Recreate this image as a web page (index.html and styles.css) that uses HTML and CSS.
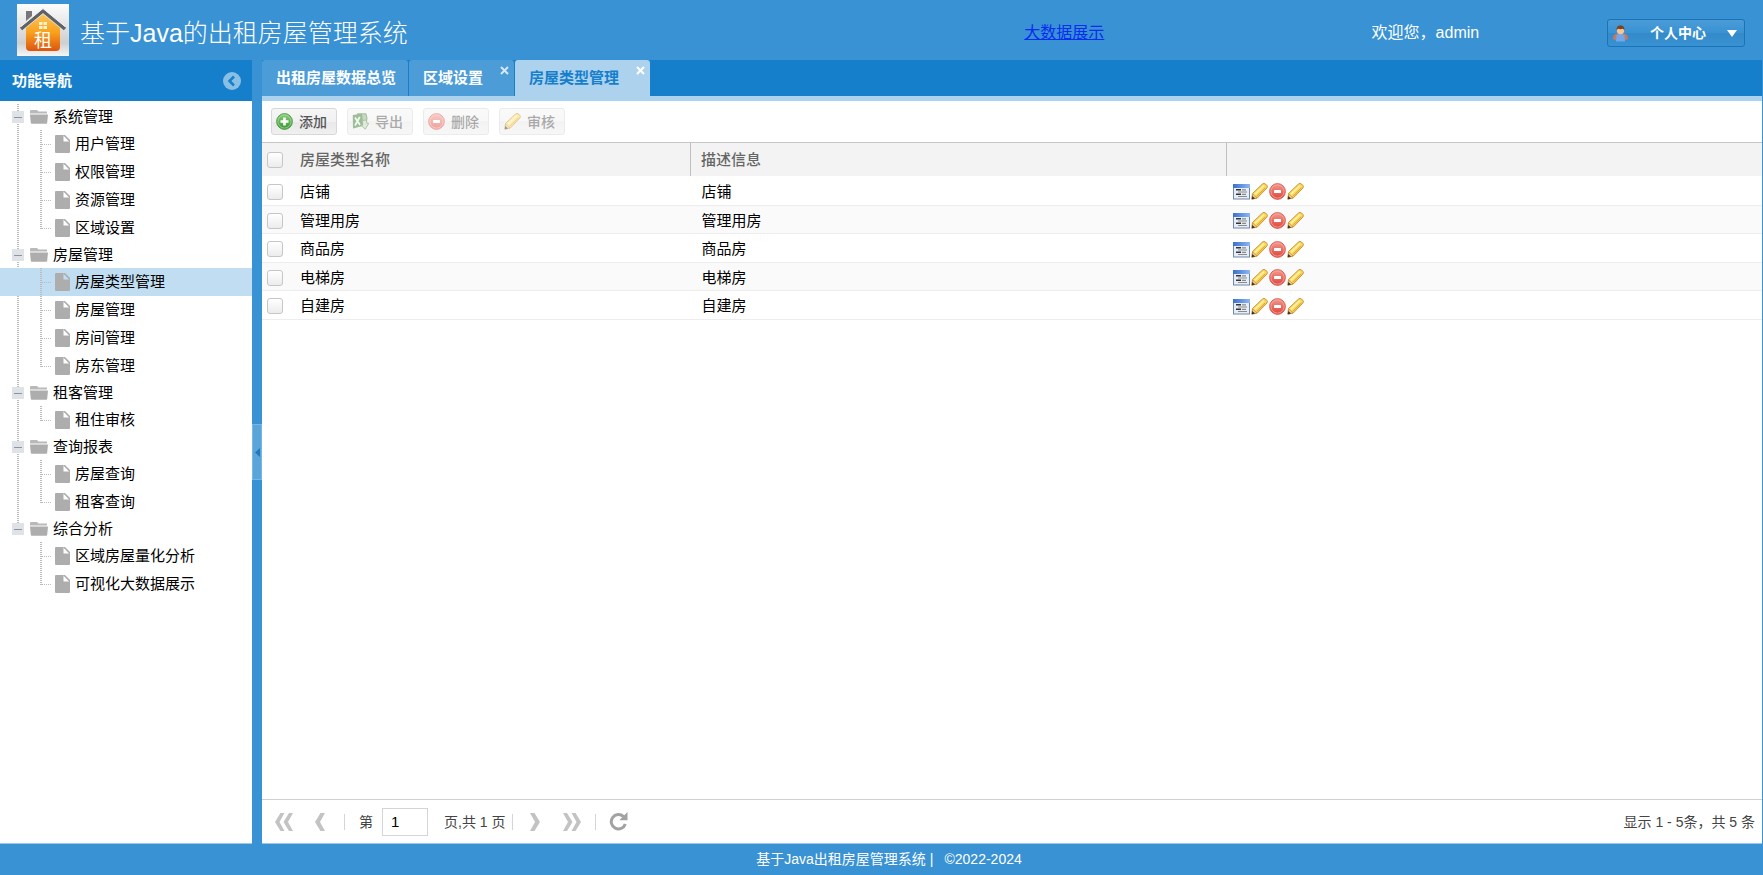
FILE: index.html
```html
<!DOCTYPE html>
<html lang="zh-CN">
<head>
<meta charset="utf-8">
<title>基于Java的出租房屋管理系统</title>
<link rel="stylesheet" href="styles.css">
</head>
<body>
<svg class="defs" width="0" height="0" aria-hidden="true">
  <defs>
    <linearGradient id="g-red" x1="0" y1="0" x2="0" y2="1"><stop offset="0" stop-color="#f29a90"/><stop offset="1" stop-color="#dd4338"/></linearGradient>
    <linearGradient id="g-green" x1="0" y1="0" x2="0" y2="1"><stop offset="0" stop-color="#8fcc84"/><stop offset="1" stop-color="#36962f"/></linearGradient>
    <linearGradient id="g-orange" x1="0" y1="0" x2="0" y2="1"><stop offset="0" stop-color="#fbc65a"/><stop offset=".5" stop-color="#f9a01c"/><stop offset="1" stop-color="#dd5510"/></linearGradient>
    <linearGradient id="g-silver" x1="0" y1="0" x2="0" y2="1"><stop offset="0" stop-color="#fdfdfd"/><stop offset=".75" stop-color="#cfcfcf"/><stop offset="1" stop-color="#f6f6f6"/></linearGradient>
    <linearGradient id="g-bar" x1="0" y1="0" x2="1" y2="0"><stop offset="0" stop-color="#3a6fd0"/><stop offset="1" stop-color="#8db8f2"/></linearGradient>
    <symbol id="folder" viewBox="0 0 18 14"><path fill="#b9b9b9" d="M0 1.2Q0 0 1 0h6l1.6 1.6H17v2H0z"/><path fill="#adadad" d="M0 4.400h18l-.8 8.400q0 1-1 1H1.800q-1 0-1-1z"/></symbol>
    <symbol id="file" viewBox="0 0 15 18"><path fill="#adadad" d="M1 0h7.500v6.500H15V17q0 1-1 1H1q-1 0-1-1V1q0-1 1-1z"/><path fill="#adadad" d="M8 0h2l5 5v2.500L8.600.8z"/></symbol>
    <symbol id="details" viewBox="0 0 17 17"><rect x=".5" y="1.500" width="16" height="14.500" fill="#e6edf6" stroke="#6f88ab"/><rect x="0" y="1" width="17" height="4" fill="url(#g-bar)"/><path stroke="#333" stroke-width="1.500" d="M3 6.800h5M3 11.300h5"/><path stroke="#8b8b86" stroke-width="1.200" d="M5 9h9M9 6.800h4M5 13.500h9M9 11.300h4"/></symbol>
    <symbol id="pencil" viewBox="0 0 17 17"><path fill="#f8d75c" stroke="#c58c2e" stroke-width=".9" stroke-linejoin="round" d="M.8 16.200 1.500 10.500 11.500 1q1.500-1.200 3 0l1.300 1.300q1.200 1.400 0 2.900L6.300 15z"/><path fill="none" stroke="#fff0a3" stroke-width="1.800" d="m3.800 11.300 9.200-8.700"/><path fill="none" stroke="#d99d34" d="m5.800 13.500 8.600-8.600"/><path fill="#efcfa0" stroke="#bd8428" stroke-width=".6" d="M1 16 1.800 11 6 15z"/><path fill="#3b3326" d="m.8 16.300.5-3.300 2.800 2.600z"/></symbol>
    <symbol id="remove" viewBox="0 0 17 17"><circle cx="8.500" cy="8.500" r="7.900" fill="url(#g-red)" stroke="#d95b50" stroke-width=".9"/><circle cx="8.500" cy="8.500" r="6.600" fill="none" stroke="#f6a9a0" stroke-width=".8"/><rect x="5" y="7" width="7" height="3" rx=".6" fill="#fff"/></symbol>
    <symbol id="add" viewBox="0 0 17 17"><circle cx="8.500" cy="8.500" r="7.900" fill="url(#g-green)" stroke="#4a9a40" stroke-width=".9"/><circle cx="8.500" cy="8.500" r="6.600" fill="none" stroke="#b2dcaa" stroke-width=".7"/><path fill="#fff" d="M7.200 4.500h2.600v2.700h2.700v2.600H9.800v2.700H7.200V9.800H4.500V7.200h2.700z"/></symbol>
    <symbol id="excel" viewBox="0 0 17 17"><path fill="#8fb57c" stroke="#4d7d42" d="M5.500.8H14l1 4.200-1 7H6z"/><path fill="#3f7d35" d="M.8 2 10 .8l1.500 12L1 15.500z"/><path stroke="#e9f3e2" stroke-width="1.800" d="m3 4.500 5 7.500M7.800 4 3 12.500"/><path fill="#c4dab8" stroke="#4d7d42" stroke-width=".8" d="m10.500 7.500 4-.5.3 3.300h2l-3.500 5.900-4.500-4h2z"/></symbol>
    <symbol id="first" viewBox="0 0 18 18"><path fill="#c3c3c3" d="M5.500 0h4L4.500 9l5 9h-4L0 9zM14 0h4l-5 9 5 9h-4L8.500 9z"/></symbol>
    <symbol id="prev" viewBox="0 0 10 18"><path fill="#c3c3c3" d="M5.500 0H10L5 9l5 9H5.500L0 9z"/></symbol>
  </defs>
</svg>

<header class="top">
  <div class="brand">
    <svg class="logo" viewBox="0 0 52 52" role="img" aria-label="租">
      <rect width="52" height="52" fill="url(#g-silver)"/>
      <path fill="#777" d="M9 7h6v5l-6 5z"/>
      <path fill="url(#g-orange)" d="M26 10 43 24v19q0 4-4 4H13q-4 0-4-4V24z"/>
      <path fill="none" stroke="#5e6266" stroke-width="3.500" d="M4 25 26 7l22 18"/>
      <path fill="none" stroke="#eee" stroke-width="1" d="M4 22.500 26 4.500l22 18"/>
      <path fill="#fff3cc" d="M22 18h3.500v3H22zm4.500 0H30v3h-3.500zM22 22h3.500v3H22zm4.500 0H30v3h-3.500z"/>
      <text x="26" y="43" class="logo-text" text-anchor="middle">租</text>
    </svg>
    <h1 class="brand-name">基于Java的出租房屋管理系统</h1>
  </div>
  <div class="promo"><a class="bigdata" href="#bigdata">大数据展示</a></div>
  <div class="account">
    <span class="welcome">欢迎您，admin</span>
    <button class="profile" type="button">
      <svg width="17" height="17" viewBox="0 0 17 17" aria-hidden="true"><path fill="#c9785a" d="M.8 14q.5-5 4-5.500h7.400q3.500.5 4 5.500l-2.500 1H3z"/><path fill="#6fa8f0" d="M4 16.500 4.500 10q4-2 8 0l.5 6.500z"/><circle cx="8.500" cy="5.500" r="3.700" fill="#f3c79c"/><path fill="#7a4424" d="M4.600 5.500Q4 .5 8.500.3q4.500.2 3.900 5.200L11 3.800q-2.500.7-5 0z"/></svg>
      <span>个人中心</span>
      <svg width="10" height="7" viewBox="0 0 10 7" aria-hidden="true"><path fill="#fff" d="M0 0h10L5 7z"/></svg>
    </button>
  </div>
</header>

<div class="body">
  <aside class="side">
    <div class="side-head">
      <h2 class="side-title">功能导航</h2>
      <button class="round" type="button" aria-label="收起导航"><svg width="18" height="18" viewBox="0 0 18 18" aria-hidden="true"><circle cx="9" cy="9" r="9" fill="#8abfe5"/><path fill="none" stroke="#157fcc" stroke-width="2.500" d="m11 4.500-4.500 4.500 4.500 4.500"/></svg></button>
    </div>
    <nav>
      <ul class="tree">
        <li class="branch"><button class="node" type="button"><i class="minus"></i><svg class="folder"><use href="#folder"/></svg>系统管理</button>
          <ul class="leaves">
            <li><a href="#u"><svg class="file"><use href="#file"/></svg>用户管理</a></li>
            <li><a href="#p"><svg class="file"><use href="#file"/></svg>权限管理</a></li>
            <li><a href="#r"><svg class="file"><use href="#file"/></svg>资源管理</a></li>
            <li><a href="#a"><svg class="file"><use href="#file"/></svg>区域设置</a></li>
          </ul>
        </li>
        <li class="branch"><button class="node" type="button"><i class="minus"></i><svg class="folder"><use href="#folder"/></svg>房屋管理</button>
          <ul class="leaves">
            <li class="current"><a href="#t" aria-current="page"><svg class="file"><use href="#file"/></svg>房屋类型管理</a></li>
            <li><a href="#h"><svg class="file"><use href="#file"/></svg>房屋管理</a></li>
            <li><a href="#room"><svg class="file"><use href="#file"/></svg>房间管理</a></li>
            <li><a href="#l"><svg class="file"><use href="#file"/></svg>房东管理</a></li>
          </ul>
        </li>
        <li class="branch"><button class="node" type="button"><i class="minus"></i><svg class="folder"><use href="#folder"/></svg>租客管理</button>
          <ul class="leaves">
            <li><a href="#c"><svg class="file"><use href="#file"/></svg>租住审核</a></li>
          </ul>
        </li>
        <li class="branch"><button class="node" type="button"><i class="minus"></i><svg class="folder"><use href="#folder"/></svg>查询报表</button>
          <ul class="leaves">
            <li><a href="#hq"><svg class="file"><use href="#file"/></svg>房屋查询</a></li>
            <li><a href="#tq"><svg class="file"><use href="#file"/></svg>租客查询</a></li>
          </ul>
        </li>
        <li class="branch"><button class="node" type="button"><i class="minus"></i><svg class="folder"><use href="#folder"/></svg>综合分析</button>
          <ul class="leaves">
            <li><a href="#an"><svg class="file"><use href="#file"/></svg>区域房屋量化分析</a></li>
            <li><a href="#v"><svg class="file"><use href="#file"/></svg>可视化大数据展示</a></li>
          </ul>
        </li>
      </ul>
    </nav>
  </aside>

  <div class="splitter">
    <button class="grip" type="button" aria-label="折叠侧栏"><svg width="5" height="9" viewBox="0 0 5 9" aria-hidden="true"><path fill="#2079c0" d="M5 0v9L0 4.500z"/></svg></button>
  </div>

  <main class="main">
    <div class="tabs">
      <div class="tab home"><button type="button">出租房屋数据总览</button></div>
      <div class="tab"><button type="button">区域设置</button><button class="close" type="button" aria-label="关闭"><svg width="9" height="9" viewBox="0 0 9 9" aria-hidden="true"><path stroke="currentColor" stroke-width="2" d="m1 1 7 7M8 1 1 8"/></svg></button></div>
      <div class="tab active"><button type="button">房屋类型管理</button><button class="close" type="button" aria-label="关闭"><svg width="9" height="9" viewBox="0 0 9 9" aria-hidden="true"><path stroke="currentColor" stroke-width="2" d="m1 1 7 7M8 1 1 8"/></svg></button></div>
    </div>
    <div class="toolbar">
      <button class="tool" type="button"><svg class="ico"><use href="#add"/></svg>添加</button>
      <button class="tool" type="button" disabled><svg class="ico"><use href="#excel"/></svg>导出</button>
      <button class="tool" type="button" disabled><svg class="ico"><use href="#remove"/></svg>删除</button>
      <button class="tool" type="button" disabled><svg class="ico"><use href="#pencil"/></svg>审核</button>
    </div>
    <div class="grid">
      <table class="table">
        <colgroup><col class="c-check"><col class="c-name"><col class="c-desc"><col></colgroup>
        <thead>
          <tr><th><input type="checkbox" aria-label="全选"></th><th>房屋类型名称</th><th>描述信息</th><th></th></tr>
        </thead>
        <tbody>
          <tr><td><input type="checkbox" aria-label="店铺"></td><td>店铺</td><td>店铺</td><td><div class="acts"><button type="button" aria-label="详情"><svg class="ico"><use href="#details"/></svg></button><button type="button" aria-label="编辑"><svg class="ico"><use href="#pencil"/></svg></button><button type="button" aria-label="删除"><svg class="ico"><use href="#remove"/></svg></button><button type="button" aria-label="审核"><svg class="ico"><use href="#pencil"/></svg></button></div></td></tr>
          <tr><td><input type="checkbox" aria-label="管理用房"></td><td>管理用房</td><td>管理用房</td><td><div class="acts"><button type="button" aria-label="详情"><svg class="ico"><use href="#details"/></svg></button><button type="button" aria-label="编辑"><svg class="ico"><use href="#pencil"/></svg></button><button type="button" aria-label="删除"><svg class="ico"><use href="#remove"/></svg></button><button type="button" aria-label="审核"><svg class="ico"><use href="#pencil"/></svg></button></div></td></tr>
          <tr><td><input type="checkbox" aria-label="商品房"></td><td>商品房</td><td>商品房</td><td><div class="acts"><button type="button" aria-label="详情"><svg class="ico"><use href="#details"/></svg></button><button type="button" aria-label="编辑"><svg class="ico"><use href="#pencil"/></svg></button><button type="button" aria-label="删除"><svg class="ico"><use href="#remove"/></svg></button><button type="button" aria-label="审核"><svg class="ico"><use href="#pencil"/></svg></button></div></td></tr>
          <tr><td><input type="checkbox" aria-label="电梯房"></td><td>电梯房</td><td>电梯房</td><td><div class="acts"><button type="button" aria-label="详情"><svg class="ico"><use href="#details"/></svg></button><button type="button" aria-label="编辑"><svg class="ico"><use href="#pencil"/></svg></button><button type="button" aria-label="删除"><svg class="ico"><use href="#remove"/></svg></button><button type="button" aria-label="审核"><svg class="ico"><use href="#pencil"/></svg></button></div></td></tr>
          <tr><td><input type="checkbox" aria-label="自建房"></td><td>自建房</td><td>自建房</td><td><div class="acts"><button type="button" aria-label="详情"><svg class="ico"><use href="#details"/></svg></button><button type="button" aria-label="编辑"><svg class="ico"><use href="#pencil"/></svg></button><button type="button" aria-label="删除"><svg class="ico"><use href="#remove"/></svg></button><button type="button" aria-label="审核"><svg class="ico"><use href="#pencil"/></svg></button></div></td></tr>
        </tbody>
      </table>
    </div>
    <div class="pager">
      <button type="button" aria-label="首页"><svg width="18" height="18"><use href="#first"/></svg></button>
      <button class="prev" type="button" aria-label="上一页"><svg width="10" height="18"><use href="#prev"/></svg></button>
      <span class="sep"></span>
      <label class="page-label" for="page">第</label>
      <input class="page-input" id="page" type="text" value="1">
      <span class="page-total">页,共 1 页</span>
      <span class="sep"></span>
      <button class="next" type="button" aria-label="下一页"><svg class="flip" width="10" height="18"><use href="#prev"/></svg></button>
      <button class="last" type="button" aria-label="末页"><svg class="flip" width="18" height="18"><use href="#first"/></svg></button>
      <span class="sep"></span>
      <button class="reload" type="button" aria-label="刷新"><svg width="19" height="19" viewBox="0 0 19 19"><path fill="none" stroke="#a2a2a2" stroke-width="3" d="M14.500 4.600A7.200 7.200 0 1 0 16.300 12"/><path fill="#a2a2a2" d="M18.500 0v8.200h-8.200z"/></svg></button>
      <span class="summary">显示 1 - 5条，共 5 条</span>
    </div>
  </main>
</div>

<footer class="foot"><span>基于Java出租房屋管理系统</span><span class="bar">|</span><span>©2022-2024</span></footer>
</body>
</html>
```
FILE: styles.css
```css
* { box-sizing: border-box; }

html, body { height: 100%; }

body {
  margin: 0;
  display: flex;
  flex-direction: column;
  background: #3892d3;
  color: #000;
  font: 15px/20px "Liberation Sans", "Noto Sans CJK SC", sans-serif;
}

button {
  border: 0;
  padding: 0;
  background: none;
  color: inherit;
  font: inherit;
  cursor: pointer;
}

svg { display: block; flex: none; }
.defs { position: absolute; }

/* Header */
.top {
  flex: none;
  height: 60px;
  display: grid;
  grid-template-columns: 581fr 197fr 222fr;
  align-items: center;
  color: #fff;
  font-size: 16px;
}
.brand { display: flex; align-items: center; gap: 11px; padding-left: 17px; }
.logo { width: 52px; height: 52px; }
.logo-text { font: 18px "Noto Sans CJK SC", sans-serif; fill: #fff; }
.brand-name { margin: 0; padding-top: 6px; font-size: 25px; line-height: 36px; font-weight: 300; }
.bigdata { color: #0a2cf0; }
.bigdata, .welcome { line-height: 24px; }
.promo { padding-top: 6px; }
.account { display: flex; align-items: center; justify-content: space-between; padding: 6px 18px 0 0; }
.profile {
  display: flex;
  align-items: center;
  gap: 21px;
  height: 28px;
  padding: 0 7px 0 4px;
  border: 1px solid #1a73b5;
  border-radius: 3px;
  background: linear-gradient(#4b9cd7, #3892d3 50%, #358ac8 50%, #3892d3);
  font-size: 14px;
  font-weight: bold;
}

/* Frame */
.body { flex: 1; min-height: 0; display: flex; padding-right: 1px; }
.side { width: 252px; flex: none; background: #fff; border-bottom: 1px solid #9ac8ea; }
.side-head {
  height: 41px;
  display: flex;
  align-items: center;
  justify-content: space-between;
  padding: 0 11px 0 12px;
  background: #157fcc;
  color: #fff;
}
.side-title { margin: 0; font-size: 15px; line-height: 20px; }

/* Navigation tree */
.tree, .leaves { margin: 0; padding: 0; list-style: none; }
.tree { padding-top: 3px; }
.branch { background: repeating-linear-gradient(#bbb 0 1px, #fff 1px 2px) 17px 0 / 2px 100% no-repeat; }
.branch:last-child { background-size: 2px 13px; }
.node {
  display: flex;
  align-items: center;
  width: 100%;
  height: 26px;
  padding-left: 12px;
}
.minus {
  width: 12px;
  height: 12px;
  margin-right: 6px;
  background: linear-gradient(#8f959c, #8f959c) center / 8px 1px no-repeat, #dfe2e7;
}
.folder { width: 18px; height: 14px; margin-right: 5px; }
.leaves a {
  display: flex;
  align-items: center;
  gap: 5px;
  height: 28px;
  padding-left: 55px;
  color: #000;
  text-decoration: none;
  background:
    repeating-linear-gradient(#bbb 0 1px, transparent 1px 2px) 40px 0 / 2px 100% no-repeat,
    repeating-linear-gradient(90deg, #bbb 0 1px, transparent 1px 2px) 42px 14px / 9px 1px no-repeat;
}
.leaves li:last-child a { background-size: 2px 15px, 9px 1px; }
.leaves .current { background: #c1ddf1; }
.file { width: 15px; height: 18px; }

/* Splitter */
.splitter { width: 10px; flex: none; display: flex; align-items: center; }
.grip {
  width: 100%;
  height: 56px;
  display: flex;
  align-items: center;
  justify-content: center;
  background: #5ba5db;
  border: 1px solid #7ab6e2;
}

/* Tabs */
.main { flex: 1; min-width: 0; display: flex; flex-direction: column; background: #fff; border-bottom: 1px solid #9ac8ea; }
.tabs {
  flex: none;
  height: 41px;
  display: flex;
  gap: 1px;
  background: #157fcc;
  border-bottom: 5px solid #add2ed;
}
.tab {
  display: flex;
  gap: 17px;
  padding: 0 5px 0 14px;
  border-radius: 3px 3px 0 0;
  background: #4b9cd7;
  color: #fff;
  font-weight: bold;
}
.home { padding-right: 12px; }
.active { background: #add2ed; color: #157fcc; }
.tab .close { align-self: flex-start; padding-top: 6px; color: #d5e8f6; }
.active .close { color: #fff; }

/* Toolbar */
.toolbar { flex: none; height: 41px; display: flex; align-items: center; gap: 10px; padding: 0 9px; }
.tool {
  display: flex;
  align-items: center;
  gap: 6px;
  width: 66px;
  height: 27px;
  padding-left: 4px;
  border: 1px solid #d8d8d8;
  border-radius: 3px;
  background: linear-gradient(#f6f6f6, #f1f1f1 50%, #e8e8e8 50%, #f0f0f0);
  color: #555;
  font-size: 14px;
  font-weight: 500;
}
.tool:disabled { opacity: .5; }
.ico { width: 17px; height: 17px; }

/* Grid */
.grid { flex: 1; min-height: 0; overflow: auto; border-top: 1px solid #c6c6c6; }
.table { width: 100%; border-collapse: collapse; table-layout: fixed; }
.c-check { width: 28px; }
.c-name { width: 26.7%; }
.c-desc { width: 35.7%; }
th { height: 33px; padding: 0 0 0 10px; background: #f3f3f3; color: #666; font-weight: 500; text-align: left; }
th + th + th { border-left: 1px solid #c0c0c0; }
td { height: 28px; padding: 3px 0 0 10px; border-bottom: 1px solid #ededed; }
td:nth-child(3) { padding-left: 11px; }
td:nth-child(4) { padding-left: 7px; }
th:first-child, td:first-child { padding-left: 5px; }
tbody tr:nth-child(odd) td { height: 29px; }
tbody tr:nth-child(even) { background: #fafafa; }
input[type="checkbox"] {
  display: block;
  appearance: none;
  width: 16px;
  height: 16px;
  margin: 0;
  border: 1px solid #c6c6c6;
  border-radius: 3px;
  background: linear-gradient(#fff, #ececec);
}
.acts { display: flex; gap: 1px; }

/* Pager */
.pager {
  flex: none;
  height: 44px;
  display: flex;
  align-items: center;
  padding: 0 7px 0 13px;
  border-top: 1px solid #d0d0d0;
  color: #444;
  font-size: 14px;
}
.flip { transform: scaleX(-1); }
.prev { margin: 0 19px 0 22px; }
.next { margin: 0 23px 0 17px; }
.last { margin-right: 14px; }
.reload { margin-left: 13px; }
.sep { width: 1px; height: 16px; background: #d5d5d5; }
.page-label { margin: 0 9px 0 14px; }
.page-input {
  width: 46px;
  height: 28px;
  margin-right: 16px;
  padding: 0 8px;
  border: 1px solid #d5d5d5;
  border-radius: 0;
  color: #000;
  font: inherit;
  font-size: 15px;
}
.page-total { margin-right: 7px; }
.summary { margin-left: auto; }

/* Footer */
.foot {
  flex: none;
  height: 31px;
  display: flex;
  align-items: center;
  justify-content: center;
  padding: 0 0 1px 15px;
  color: #fff;
  font-size: 14px;
}
.bar { margin: 0 11px 0 4px; }
```
